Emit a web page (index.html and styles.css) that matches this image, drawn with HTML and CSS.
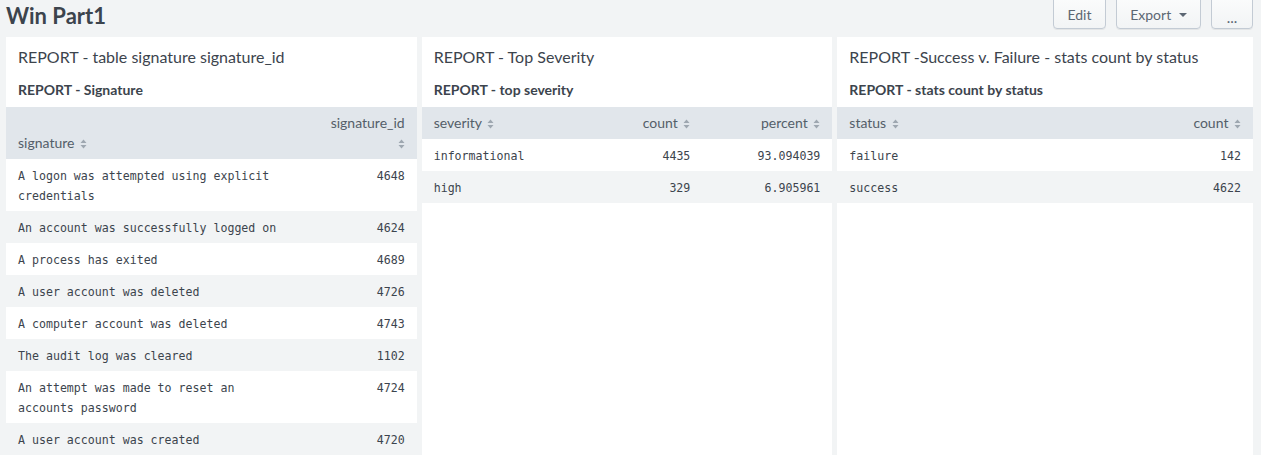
FILE: index.html
```html
<!DOCTYPE html>
<html>
<head>
<meta charset="utf-8">
<link rel="stylesheet" href="styles.css">
</head>
<body>
<div class="page">
  <header class="dash-header">
    <h1 class="dash-title">Win Part1</h1>
    <div class="actions">
      <button class="btn btn-edit">Edit</button>
      <button class="btn btn-export">Export <span class="caret"></span></button>
      <button class="btn btn-more">...</button>
    </div>
  </header>
  <div class="panels">
    <section class="panel">
      <h2 class="panel-title">REPORT - table signature signature_id</h2>
      <h3 class="panel-sub">REPORT - Signature</h3>
      <table class="tbl tbl-sig">
        <colgroup><col class="c-sig"><col></colgroup>
        <thead>
          <tr>
            <th class="left">signature <svg class="sort" viewBox="0 0 7 10"><path d="M3.5 0.5 L6.5 4 H0.5 Z M3.5 9.5 L6.5 6 H0.5 Z"/></svg></th>
            <th class="right"><span class="hline">signature_id</span><br><svg class="sort" viewBox="0 0 7 10"><path d="M3.5 0.5 L6.5 4 H0.5 Z M3.5 9.5 L6.5 6 H0.5 Z"/></svg></th>
          </tr>
        </thead>
        <tbody>
          <tr><td>A logon was attempted using explicit credentials</td><td class="num">4648</td></tr>
          <tr><td>An account was successfully logged on</td><td class="num">4624</td></tr>
          <tr><td>A process has exited</td><td class="num">4689</td></tr>
          <tr><td>A user account was deleted</td><td class="num">4726</td></tr>
          <tr><td>A computer account was deleted</td><td class="num">4743</td></tr>
          <tr><td>The audit log was cleared</td><td class="num">1102</td></tr>
          <tr><td>An attempt was made to reset an accounts password</td><td class="num">4724</td></tr>
          <tr><td>A user account was created</td><td class="num">4720</td></tr>
        </tbody>
      </table>
    </section>
    <section class="panel">
      <h2 class="panel-title">REPORT - Top Severity</h2>
      <h3 class="panel-sub">REPORT - top severity</h3>
      <table class="tbl tbl-sev">
        <colgroup><col><col class="c-count"><col class="c-pct"></colgroup>
        <thead>
          <tr>
            <th class="left">severity <svg class="sort" viewBox="0 0 7 10"><path d="M3.5 0.5 L6.5 4 H0.5 Z M3.5 9.5 L6.5 6 H0.5 Z"/></svg></th>
            <th class="right">count <svg class="sort" viewBox="0 0 7 10"><path d="M3.5 0.5 L6.5 4 H0.5 Z M3.5 9.5 L6.5 6 H0.5 Z"/></svg></th>
            <th class="right">percent <svg class="sort" viewBox="0 0 7 10"><path d="M3.5 0.5 L6.5 4 H0.5 Z M3.5 9.5 L6.5 6 H0.5 Z"/></svg></th>
          </tr>
        </thead>
        <tbody>
          <tr><td>informational</td><td class="num">4435</td><td class="num">93.094039</td></tr>
          <tr><td>high</td><td class="num">329</td><td class="num">6.905961</td></tr>
        </tbody>
      </table>
    </section>
    <section class="panel panel-wide">
      <h2 class="panel-title">REPORT -Success v. Failure - stats count by status</h2>
      <h3 class="panel-sub">REPORT - stats count by status</h3>
      <table class="tbl">
        <thead>
          <tr>
            <th class="left">status <svg class="sort" viewBox="0 0 7 10"><path d="M3.5 0.5 L6.5 4 H0.5 Z M3.5 9.5 L6.5 6 H0.5 Z"/></svg></th>
            <th class="right">count <svg class="sort" viewBox="0 0 7 10"><path d="M3.5 0.5 L6.5 4 H0.5 Z M3.5 9.5 L6.5 6 H0.5 Z"/></svg></th>
          </tr>
        </thead>
        <tbody>
          <tr><td>failure</td><td class="num">142</td></tr>
          <tr><td>success</td><td class="num">4622</td></tr>
        </tbody>
      </table>
    </section>
  </div>
</div>
</body>
</html>
```

FILE: styles.css
```css
html, body {
  margin: 0;
  padding: 0;
  background: #f2f4f5;
  height: 100%;
  overflow: hidden;
}
body {
  font-family: Lato, "Open Sans", sans-serif;
  color: #3c444d;
}
.page {
  padding: 0 8px 0 6px;
}
.dash-header {
  display: flex;
  justify-content: space-between;
  align-items: flex-start;
  height: 37px;
}
.dash-title {
  margin: 2px 0 0 0;
  font-size: 22px;
  font-weight: 700;
  line-height: 28px;
  color: #3c444d;
}
.actions {
  display: flex;
  gap: 10px;
  margin-top: -4px;
  margin-right: 0;
}
.btn {
  height: 33px;
  padding: 3px 0 0;
  border: 1px solid #c3cbd4;
  border-radius: 4px;
  background: linear-gradient(#fbfcfc, #f2f4f5);
  font-family: inherit;
  font-size: 14px;
  color: #5c6773;
  box-shadow: 0 1px 0 rgba(0,0,0,0.06);
  text-align: center;
}
.btn-edit { width: 53px; }
.btn-export { width: 85px; }
.btn-more { width: 42px; padding-top: 9px; font-size: 15px; }
.caret {
  display: inline-block;
  width: 0;
  height: 0;
  margin-left: 4px;
  vertical-align: 3px;
  border-left: 4px solid transparent;
  border-right: 4px solid transparent;
  border-top: 4px solid #5c6773;
}
.panels {
  display: flex;
  gap: 5px;
  align-items: stretch;
  height: 430px;
}
.panel {
  flex: 411 1 0;
  background: #fff;
  min-width: 0;
}
.panel-wide { flex: 416 1 0; }
.panel-title {
  margin: 0;
  padding: 10px 12px 0;
  font-size: 16px;
  font-weight: 400;
  line-height: 20px;
  color: #3c444d;
}
.panel-sub {
  margin: 0;
  padding: 13px 12px 0;
  font-size: 14px;
  font-weight: 700;
  line-height: 20px;
  height: 40px;
  box-sizing: border-box;
}
.tbl {
  width: 100%;
  border-collapse: collapse;
  table-layout: fixed;
}
.tbl th {
  background: #e1e6eb;
  font-size: 14px;
  font-weight: 400;
  color: #545e69;
  line-height: 20px;
  padding: 6px 12px;
  vertical-align: bottom;
  white-space: nowrap;
}
.tbl th.left { text-align: left; }
.tbl th.right { text-align: right; }
.sort {
  width: 7px;
  height: 10px;
  margin-left: 2px;
  fill: #9ea7b0;
  vertical-align: -1px;
}
.tbl td {
  font-family: "DejaVu Sans Mono", monospace;
  font-size: 11.6px;
  line-height: 20px;
  padding: 7px 12px 5px;
  vertical-align: top;
  color: #3c444d;
}
.tbl td.num { text-align: right; }
.tbl tbody tr:nth-child(even) td { background: #f2f4f5; }
.c-sig { width: 290px; }
.c-count { width: 130px; }
.c-pct { width: 130px; }
```
